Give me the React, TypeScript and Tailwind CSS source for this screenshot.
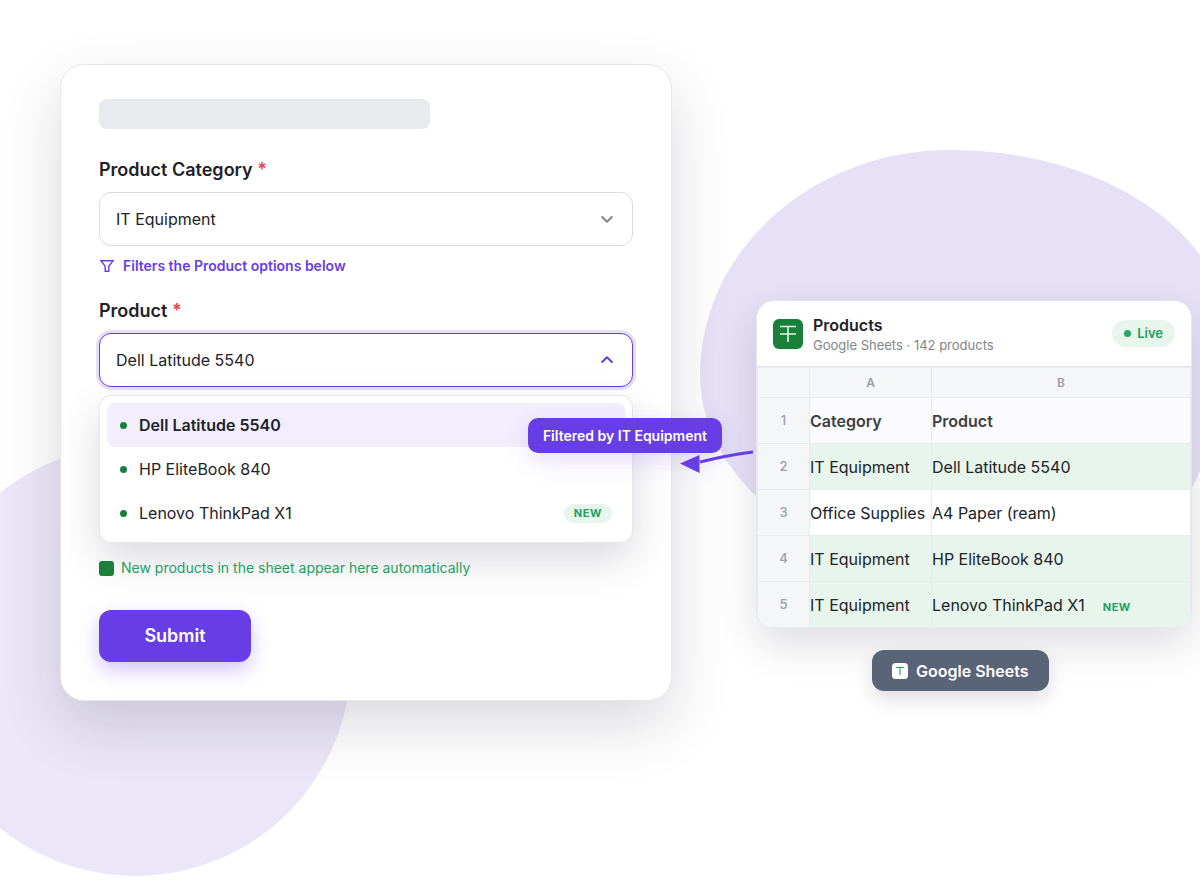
import { useState } from "react";

type SheetRow = {
    category: string;
    product: string;
    isNew?: boolean;
};

const CATEGORIES = ["IT Equipment", "Office Supplies"];

const ROWS: SheetRow[] = [
    { category: "IT Equipment", product: "Dell Latitude 5540" },
    { category: "Office Supplies", product: "A4 Paper (ream)" },
    { category: "IT Equipment", product: "HP EliteBook 840" },
    { category: "IT Equipment", product: "Lenovo ThinkPad X1", isNew: true },
];

function NewBadge() {
    return (
        <span className="inline-block rounded-full bg-[#e8f5ec] px-2.5 text-[11px] leading-[19px] font-bold tracking-wider text-[#22a062]">
            NEW
        </span>
    );
}

function Chevron({ up = false }: { up?: boolean }) {
    return (
        <svg
            className={
                up
                    ? "pointer-events-none absolute top-5 right-5 h-3.5 w-3 text-[#673de6]"
                    : "pointer-events-none absolute top-5 right-5 h-3.5 w-3 text-[#80868b]"
            }
            viewBox="0 0 12 14"
            fill="none"
            stroke="currentColor"
            strokeWidth="2"
            strokeLinecap="round"
            strokeLinejoin="round"
            aria-hidden="true"
        >
            <path d={up ? "M1.2 9 6 4.2 10.8 9" : "M1.2 5 6 9.8 10.8 5"} />
        </svg>
    );
}

function ProductForm({
    category,
    onCategoryChange,
}: {
    category: string;
    onCategoryChange: (category: string) => void;
}) {
    const options = ROWS.filter((row) => row.category === category);
    const [product, setProduct] = useState("Dell Latitude 5540");

    return (
        <form
            onSubmit={(e) => e.preventDefault()}
            className="min-w-0 flex-1 rounded-3xl border border-[#e5e7eb] bg-white px-[38px] pt-[34px] pb-[38px] shadow-[0_24px_60px_rgba(24,24,48,0.16)]"
        >
            <div className="h-[30px] w-[62%] rounded-lg bg-[#e9eaee]" />

            <label htmlFor="category" className="mt-[29px] block text-lg leading-6 font-semibold text-[#1f2129]">
                Product Category <span className="text-[#e5484d]">*</span>
            </label>
            <div className="relative mt-2.5">
                <select
                    id="category"
                    value={category}
                    onChange={(e) => onCategoryChange(e.target.value)}
                    className="block h-[54px] w-full appearance-none rounded-xl border border-[#d9dbe0] bg-white px-4 text-base text-[#202329] outline-none"
                >
                    {CATEGORIES.map((name) => (
                        <option key={name}>{name}</option>
                    ))}
                </select>
                <Chevron />
            </div>
            <p className="mt-2.5 flex items-center gap-2 text-sm leading-5 font-semibold text-[#673de6]">
                <svg className="h-4 w-4" viewBox="0 0 16 16" fill="none" stroke="currentColor" strokeWidth="1.4" aria-hidden="true">
                    <path d="M2 2.800h12L9.800 8.300v5H6.200v-5z" />
                </svg>
                Filters the Product options below
            </p>

            <label htmlFor="product" className="mt-[23px] block text-lg leading-6 font-semibold text-[#1f2129]">
                Product <span className="text-[#e5484d]">*</span>
            </label>
            <div className="relative mt-2.5">
                <select
                    id="product"
                    value={product}
                    onChange={(e) => setProduct(e.target.value)}
                    className="block h-[54px] w-full appearance-none rounded-xl border border-[#673de6] bg-white px-4 text-base text-[#202329] ring-3 ring-[#e5dff8] outline-none"
                >
                    {options.map((row) => (
                        <option key={row.product}>{row.product}</option>
                    ))}
                </select>
                <Chevron up />
            </div>

            <div className="relative mt-2">
                <ul className="rounded-xl border border-[#e5e7eb] bg-white p-[7px] shadow-[0_16px_40px_rgba(24,24,48,0.16)]">
                    {options.map((row) => (
                        <li key={row.product}>
                            <button
                                type="button"
                                onClick={() => setProduct(row.product)}
                                className={
                                    row.product === product
                                        ? "flex h-11 w-full items-center gap-3 rounded-lg bg-[#f2eefd] px-[13px] text-base font-semibold text-[#202329]"
                                        : "flex h-11 w-full items-center gap-3 rounded-lg px-[13px] text-base text-[#202329]"
                                }
                            >
                                <span className="h-[7px] w-[7px] rounded-full bg-[#188038]" />
                                <span className="flex-1 text-left">{row.product}</span>
                                {row.isNew && <NewBadge />}
                            </button>
                        </li>
                    ))}
                </ul>

                {/* Callout pointing from the sheet to the filtered list */}
                <div className="absolute top-[23px] -right-[89px] rounded-[10px] bg-[#673de6] px-[15px] text-sm leading-[35px] font-semibold whitespace-nowrap text-white shadow-[0_8px_24px_rgba(103,61,230,0.16)]">
                    Filtered by {category}
                </div>
                <svg className="absolute top-[52px] -right-[121px] h-7 w-[74px]" viewBox="0 0 74 28" aria-hidden="true">
                    <path d="M73 5Q48 8 20 15" fill="none" stroke="#673de6" strokeWidth="3" />
                    <path d="M0 16.500 19.500 8v18z" fill="#673de6" />
                </svg>
            </div>

            <p className="relative mt-[15px] flex items-center gap-[7px] text-sm leading-5 text-[#22a062]">
                <span className="h-[15px] w-[15px] rounded-[3px] bg-[#188038]" />
                New products in the sheet appear here automatically
            </p>

            <button
                type="submit"
                className="mt-8 h-[52px] w-[152px] rounded-xl bg-[#673de6] text-lg font-semibold text-white shadow-[0_8px_20px_rgba(103,61,230,0.3)]"
            >
                Submit
            </button>
        </form>
    );
}

function SheetCard({ category }: { category: string }) {
    return (
        <section className="overflow-hidden rounded-[18px] border border-[#e5e7eb] bg-white shadow-[0_16px_40px_rgba(24,24,48,0.14)]">
            <header className="flex h-[66px] items-center gap-2.5 border-b border-[#e2e4e9] px-4">
                <svg className="h-[30px] w-[30px]" viewBox="0 0 30 30" aria-hidden="true">
                    <rect width="30" height="30" rx="6" fill="#188038" />
                    <path d="M7 7.500h16M7 15h16M15 7.500V23" stroke="#e6f4ec" strokeWidth="1.6" />
                </svg>
                <div className="flex-1 pt-0.5">
                    <h2 className="text-base leading-5 font-semibold text-[#1f2129]">Products</h2>
                    <p className="text-[13px] leading-5 text-[#80868b]">Google Sheets · 142 products</p>
                </div>
                <span className="flex items-center gap-1.5 rounded-full bg-[#e8f5ec] px-3 text-[13px] leading-[27px] font-semibold text-[#22a062]">
                    <span className="h-[7px] w-[7px] rounded-full bg-[#22a867]" />
                    Live
                </span>
            </header>

            <table className="w-full table-fixed border-collapse text-base text-[#202329]">
                <colgroup>
                    <col className="w-[52px]" />
                    <col className="w-[122px]" />
                    <col />
                </colgroup>
                <thead>
                    <tr className="h-[30px] bg-[#f5f6f8] text-xs text-[#9aa0a6]">
                        <th className="border border-[#e8eaed]" />
                        <th className="border border-[#e8eaed] font-semibold">A</th>
                        <th className="border border-[#e8eaed] font-semibold">B</th>
                    </tr>
                </thead>
                <tbody>
                    <tr className="h-[46px] bg-[#fbfafd] text-[#3c4043]">
                        <th className="border border-[#e8eaed] bg-[#f5f6f8] text-[13px] font-medium text-[#9aa0a6]">1</th>
                        <th className="border border-[#e8eaed] text-left font-semibold">Category</th>
                        <th className="border border-[#e8eaed] text-left font-semibold">Product</th>
                    </tr>
                    {ROWS.map((row, i) => (
                        <tr
                            key={row.product}
                            className={row.category === category ? "h-[46px] bg-[#e8f5ec]" : "h-[46px] bg-white"}
                        >
                            <th className="border border-[#e8eaed] bg-[#f5f6f8] text-[13px] font-medium text-[#9aa0a6]">
                                {i + 2}
                            </th>
                            <td className="border border-[#e8eaed] whitespace-nowrap">{row.category}</td>
                            <td className="border border-[#e8eaed] whitespace-nowrap">
                                <span className="mr-2">{row.product}</span>
                                {row.isNew && <NewBadge />}
                            </td>
                        </tr>
                    ))}
                </tbody>
            </table>
        </section>
    );
}

export default function App() {
    const [category, setCategory] = useState("IT Equipment");

    return (
        <main className="relative isolate flex min-h-screen items-start gap-21 overflow-hidden bg-white pt-16 pr-2 pb-16 pl-15 font-['Inter',sans-serif]">
            {/* Background shapes */}
            <div className="absolute top-[445px] -left-20 -z-10 h-[431px] w-[431px] rounded-full bg-[#ebe7f8]" />
            <div className="absolute top-[150px] -right-[27px] -z-10 h-[430px] w-[527px] rounded-[250px_277px_160px_290px/225px_185px_245px_205px] bg-[#e6e1f6]" />

            <ProductForm category={category} onCategoryChange={setCategory} />

            <div className="mt-[236px] w-[436px] shrink-0">
                <SheetCard category={category} />
                <button
                    type="button"
                    className="mt-[21px] ml-29 flex h-[41px] items-center gap-2 rounded-xl bg-[#5a6478] px-5 text-base font-semibold text-white shadow-[0_8px_20px_rgba(24,24,48,0.14)]"
                >
                    <svg className="h-4 w-4" viewBox="0 0 16 16" aria-hidden="true">
                        <rect width="16" height="16" rx="3.500" fill="#fff" />
                        <path d="M4 4.500h8M8 4.500V12" stroke="#22a062" strokeWidth="1.100" />
                    </svg>
                    Google Sheets
                </button>
            </div>
        </main>
    );
}
